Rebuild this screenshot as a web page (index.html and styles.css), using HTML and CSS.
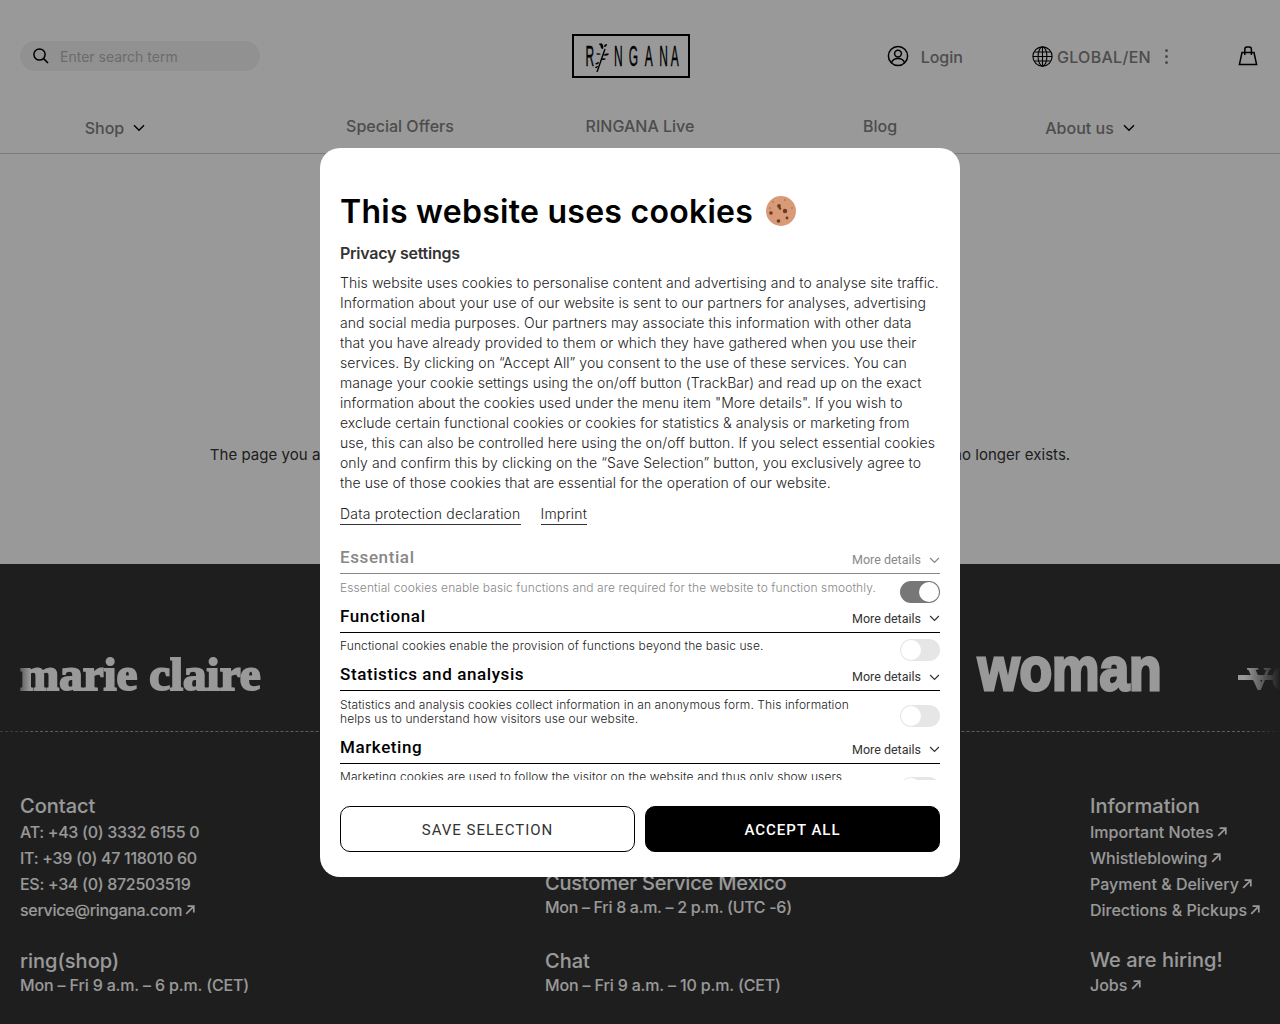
FILE: index.html
```html
<!DOCTYPE html>
<html lang="en">
<head>
<meta charset="utf-8">
<title>RINGANA</title>
<link rel="stylesheet" href="styles.css">
</head>
<body>
<svg class="sprite" width="0" height="0" aria-hidden="true">
  <symbol id="chev" viewBox="0 0 12 8"><path d="M1 1.2 6 6.2 11 1.2" fill="none" stroke="currentColor" stroke-width="1.4"/></symbol>
  <symbol id="arrow" viewBox="0 0 10 10"><path d="M1.2 8.8 8.4 1.6M2.6 1.2H8.8V7.4" fill="none" stroke="currentColor" stroke-width="1.7"/></symbol>
</svg>
<div class="page">
  <header class="header">
    <div class="top">
      <div class="search">
        <svg class="search-icon" viewBox="0 0 18 18" width="18" height="18"><circle cx="7.5" cy="7.5" r="5.6" fill="none" stroke="#000" stroke-width="1.5"/><path d="M11.6 11.6 16 16" stroke="#000" stroke-width="1.6" fill="none"/></svg>
        <span class="placeholder">Enter search term</span>
      </div>
      <div class="logo">
        <svg viewBox="0 0 118 44" width="118" height="44">
          <text class="logo-text" transform="scale(.4 1)" y="32"><tspan x="34">R</tspan><tspan x="105">N</tspan><tspan x="142">G</tspan><tspan x="182">A</tspan><tspan x="218">N</tspan><tspan x="247">A</tspan></text>
          <path d="M25 38 33 15" stroke="#000" stroke-width="1.4" fill="none"/>
          <path d="M30 15c-2-2-2-4-1-6 2 1 3 3 2 6ZM32 13c0-2 1-3 3-3 0 2-1 3-3 3ZM31 12c-2 0-4-1-4-2 2-1 3 0 4 2ZM29 20c-2-1-4-1-5 0 1 1 4 1 5 0ZM31 21c2-1 4-2 6-1-1 2-4 2-6 1ZM27 28c-2 0-3 1-4 2 2 1 4 0 4-2ZM29 26c2 0 4 0 5-1-1-1-4-1-5 1ZM26 32c-2 0-3 1-3 2 1 0 3 0 3-2Z" fill="#000"/>
        </svg>
      </div>
      <div class="tools">
        <div class="tool tool-login">
          <svg viewBox="0 0 22 22" width="22" height="22"><circle cx="11" cy="11" r="9.6" fill="none" stroke="#000" stroke-width="1.5"/><circle cx="11" cy="8.6" r="3.4" fill="none" stroke="#000" stroke-width="1.5"/><path d="M4.600 17.600c1-3 3.400-4 6.400-4s5.400 1 6.400 4" fill="none" stroke="#000" stroke-width="1.500"/></svg>
          <span>Login</span>
        </div>
        <div class="tool tool-lang">
          <svg viewBox="0 0 21 21" width="21" height="21"><g fill="none" stroke="#000" stroke-width="1.1"><circle cx="10.5" cy="10.5" r="9.6"/><ellipse cx="10.5" cy="10.5" rx="4.4" ry="9.6"/><path d="M10.500 1v19M1 10.500h19M2.200 6h16.600M2.200 15h16.600"/></g></svg>
          <span>GLOBAL/EN</span>
        </div>
        <div class="dots"><i></i><i></i><i></i></div>
        <svg class="bag" viewBox="0 0 20 20" width="20" height="20"><g fill="none" stroke="#000" stroke-width="1.5"><path d="M4 6.500h12L18.600 18.600H1.400Z"/><path d="M6.800 9V3.400c0-1.400 1-2.400 2-2.400h2.600c1 0 2 1 2 2.400V9"/></g></svg>
      </div>
    </div>
    <nav class="nav">
      <a class="nav-item nav-drop">Shop <svg width="12" height="8"><use href="#chev"/></svg></a>
      <a class="nav-item">Special Offers</a>
      <a class="nav-item">RINGANA Live</a>
      <a class="nav-item">Blog</a>
      <a class="nav-item nav-drop">About us <svg width="12" height="8"><use href="#chev"/></svg></a>
    </nav>
  </header>

  <main class="main">
    <p class="notfound">The page you are looking for cannot be found. It may have been removed, renamed or perhaps it simply no longer exists.</p>
  </main>

  <footer class="footer">
    <div class="press">
      <span class="brand brand-marie">marie claire</span>
      <span class="brand brand-hidden">Vogue</span>
      <span class="brand brand-woman">woman</span>
      <span class="brand brand-ve">ve</span>
    </div>
    <div class="columns">
      <section class="col">
        <h4>Contact</h4>
        <ul>
          <li class="tight">AT: +43 (0) 3332 6155 0</li>
          <li class="tight">IT: +39 (0) 47 118010 60</li>
          <li class="tight">ES: +34 (0) 872503519</li>
          <li class="tight">service@ringana.com <svg class="ext" width="10" height="10"><use href="#arrow"/></svg></li>
        </ul>
        <h4 class="later">ring(shop)</h4>
        <p class="mid">Mon – Fri 9 a.m. – 6 p.m. (CET)</p>
      </section>
      <section class="col col-mid">
        <h4>Customer Service</h4>
        <p class="tight">Mon – Fri 8 a.m. – 6 p.m. (CET)</p>
        <h4 class="mex">Customer Service Mexico</h4>
        <p class="tight">Mon – Fri 8 a.m. – 2 p.m. (UTC -6)</p>
        <h4 class="chat">Chat</h4>
        <p class="mid">Mon – Fri 9 a.m. – 10 p.m. (CET)</p>
      </section>
      <section class="col col-right">
        <h4>Information</h4>
        <ul>
          <li>Important Notes <svg class="ext" width="10" height="10"><use href="#arrow"/></svg></li>
          <li>Whistleblowing <svg class="ext" width="10" height="10"><use href="#arrow"/></svg></li>
          <li>Payment &amp; Delivery <svg class="ext" width="10" height="10"><use href="#arrow"/></svg></li>
          <li>Directions &amp; Pickups <svg class="ext" width="10" height="10"><use href="#arrow"/></svg></li>
        </ul>
        <h4 class="hiring">We are hiring!</h4>
        <p>Jobs <svg class="ext" width="10" height="10"><use href="#arrow"/></svg></p>
      </section>
    </div>
  </footer>
</div>

<div class="overlay"></div>

<div class="modal" role="dialog">
  <div class="scroll">
    <h1 class="title">This website uses cookies
      <svg class="cookie" viewBox="0 0 30 30" width="30" height="30">
        <circle cx="15" cy="15" r="15" fill="#d99a78"/>
        <g fill="#6b3a26"><circle cx="13" cy="10" r="1.9"/><circle cx="19" cy="15" r="2.2"/><circle cx="5" cy="17" r="1.8"/><circle cx="12.500" cy="25" r="1.8"/><circle cx="21" cy="22" r="1.4"/><circle cx="14" cy="12.500" r="1.3"/></g>
        <g fill="#b57a58"><circle cx="7" cy="6" r="1"/><circle cx="19" cy="4" r="1"/><circle cx="26" cy="12" r="1"/><circle cx="4" cy="12" r=".9"/></g>
      </svg>
    </h1>
    <h2 class="subtitle">Privacy settings</h2>
    <p class="intro">This website uses cookies to personalise content and advertising and to analyse site traffic. Information about your use of our website is sent to our partners for analyses, advertising and social media purposes. Our partners may associate this information with other data that you have already provided to them or which they have gathered when you use their services. By clicking on “Accept All” you consent to the use of these services. You can manage your cookie settings using the on/off button (TrackBar) and read up on the exact information about the cookies used under the menu item "More details". If you wish to exclude certain functional cookies or cookies for statistics &amp; analysis or marketing from use, this can also be controlled here using the on/off button. If you select essential cookies only and confirm this by clicking on the “Save Selection” button, you exclusively agree to the use of those cookies that are essential for the operation of our website.</p>
    <div class="links"><a>Data protection declaration</a><a>Imprint</a></div>

    <section class="cat cat-off">
      <div class="cat-head"><h3>Essential</h3><span class="more">More details <svg width="11" height="7"><use href="#chev"/></svg></span></div>
      <div class="cat-body"><p>Essential cookies enable basic functions and are required for the website to function smoothly.</p><span class="toggle toggle-on"></span></div>
    </section>
    <section class="cat">
      <div class="cat-head"><h3>Functional</h3><span class="more">More details <svg width="11" height="7"><use href="#chev"/></svg></span></div>
      <div class="cat-body"><p>Functional cookies enable the provision of functions beyond the basic use.</p><span class="toggle"></span></div>
    </section>
    <section class="cat">
      <div class="cat-head"><h3>Statistics and analysis</h3><span class="more">More details <svg width="11" height="7"><use href="#chev"/></svg></span></div>
      <div class="cat-body"><p>Statistics and analysis cookies collect information in an anonymous form. This information helps us to understand how visitors use our website.</p><span class="toggle"></span></div>
    </section>
    <section class="cat">
      <div class="cat-head"><h3>Marketing</h3><span class="more">More details <svg width="11" height="7"><use href="#chev"/></svg></span></div>
      <div class="cat-body"><p>Marketing cookies are used to follow the visitor on the website and thus only show users ads that are relevant and engaging for them.</p><span class="toggle"></span></div>
    </section>
  </div>
  <div class="actions">
    <button class="btn btn-save">SAVE SELECTION</button>
    <button class="btn btn-accept">ACCEPT ALL</button>
  </div>
</div>
</body>
</html>
```
FILE: styles.css
```css
* { box-sizing: border-box; }
html, body { margin: 0; padding: 0; height: 100%; overflow: hidden; }
body { font-family: Inter, "Liberation Sans", sans-serif; background: #fff; color: #000; }
.sprite { position: absolute; }
h1, h2, h3, h4, p, ul { margin: 0; padding: 0; }
ul { list-style: none; }

.page { height: 1024px; display: flex; flex-direction: column; overflow: hidden; }

/* header */
.header { height: 154px; border-bottom: 1px solid #ccc; flex: none; }
.top { display: flex; align-items: center; justify-content: space-between; height: 112px; padding: 0 22px 0 20px; position: relative; }
.search { width: 240px; height: 30px; background: #f2f2f2; border-radius: 15px; display: flex; align-items: center; padding-left: 12px; }
.search-icon { flex: none; }
.placeholder { margin-left: 10px; padding-top: 1px; font-size: 14px; color: #b4b4b4; }
.logo { position: absolute; left: 572px; top: 34px; width: 118px; height: 44px; border: 2px solid #000; line-height: 0; }
.logo svg { margin: -2px; }
.logo-text { font-family: "Liberation Sans", sans-serif; font-size: 30px; fill: #000; stroke: #000; stroke-width: .4px; }
.tools { display: flex; align-items: center; font-size: 16px; font-weight: 500; color: #808080; }
.tools span { padding-top: 2px; }
.tool { display: flex; align-items: center; }
.tool-login span { margin-left: 12px; }
.tool-lang { margin-left: 69px; }
.tool-lang span { margin-left: 4px; letter-spacing: .3px; }
.dots { display: flex; flex-direction: column; gap: 3px; margin-left: 14px; margin-right: 70px; }
.dots i { width: 3px; height: 3px; border-radius: 50%; background: #808080; display: block; }
.nav { display: grid; grid-template-columns: 230px 340px 140px 340px 80px; height: 41px; font-size: 16px; font-weight: 500; color: #808080; }
.nav-item { justify-self: center; white-space: nowrap; display: flex; align-items: center; height: 28px; }
.nav-drop { margin-top: 2px; gap: 9px; }
.nav-drop svg { color: #000; margin-top: -1px; }

/* main */
.main { height: 410px; flex: none; padding-top: 291px; }
.notfound { text-align: center; font-size: 15px; letter-spacing: .035px; line-height: 20px; color: #333; white-space: nowrap; }

/* footer */
.footer { flex: 1; background: #333; color: #fff; }
.press { height: 168px; border-bottom: 1px dashed #999; padding: 0 0 0 20px; display: flex; align-items: flex-start; overflow: hidden; white-space: nowrap; position: relative; -webkit-mask-image: linear-gradient(90deg, rgba(0,0,0,.5) 20px, #000 30px, #000 1245px, transparent 1280px); mask-image: linear-gradient(90deg, rgba(0,0,0,.5) 20px, #000 30px, #000 1245px, transparent 1280px); }
.brand { display: block; flex: none; }
.brand-marie { font-family: "Liberation Serif", serif; font-weight: 700; font-size: 47px; line-height: 50px; margin-top: 85px; width: 242px; -webkit-text-stroke: 2px #fff; }
.brand-hidden { font-family: "Liberation Serif", serif; font-weight: 700; font-size: 47px; line-height: 50px; margin-top: 85px; width: 200px; margin-left: 150px; }
.brand-woman { font-family: "Liberation Sans", sans-serif; font-weight: 700; font-size: 62px; line-height: 60px; margin-top: 75px; margin-left: 366px; width: 183px; -webkit-text-stroke: 3px #fff; transform: scaleX(.86); transform-origin: left center; }
.brand-ve { font-family: "Liberation Serif", serif; font-weight: 700; font-size: 48px; line-height: 50px; margin-top: 85px; margin-left: 77px; padding-left: 9px; position: relative; }
.brand-ve::before { content: ""; position: absolute; left: 0; right: 0; top: 26px; height: 5px; background: #fff; }

.columns { display: grid; grid-template-columns: 525px 545px 1fr; padding: 62px 0 0 20px; }
.col h4 { font-size: 20px; font-weight: 500; line-height: 25px; }
.col li { font-size: 16px; font-weight: 500; line-height: 26px; white-space: nowrap; }
.col p { font-size: 16px; font-weight: 500; line-height: 24px; margin-top: -1px; white-space: nowrap; }
.col .tight { letter-spacing: -.3px; }
.col .mid { letter-spacing: -.15px; }
.col .later { margin-top: 25.5px; }
.col .mex { margin-top: 28.5px; letter-spacing: -.2px; }
.col .chat { margin-top: 30px; }
.col .hiring { margin-top: 22.5px; line-height: 28px; }
.ext { margin-left: -1px; vertical-align: 1px; }

/* overlay + dialog */
.overlay { position: fixed; inset: 0; background: rgba(0, 0, 0, .4); }
.modal { position: fixed; left: 320px; top: 148px; width: 640px; height: 729px; background: #fff; border-radius: 20px; padding: 20px 20px 25px; display: flex; flex-direction: column; }
.scroll { height: 612px; overflow: hidden; flex: none; }
.title { font-size: 32px; font-weight: 600; letter-spacing: .27px; line-height: 46px; margin-top: 21px; display: flex; align-items: center; gap: 13px; white-space: nowrap; height: 46px; }
.cookie { flex: none; margin-top: -3px; }
.subtitle { font-size: 16px; font-weight: 600; letter-spacing: -.25px; line-height: 22px; color: #333; margin-top: 7px; }
.intro { font-size: 14px; font-weight: 300; letter-spacing: .06px; line-height: 20px; color: #222; margin-top: 9px; }
.links { display: flex; gap: 20px; margin-top: 11px; font-size: 14px; font-weight: 300; letter-spacing: .2px; line-height: 20px; color: #222; }
.links a { border-bottom: 1px solid #333; }
.cat { font-family: Roboto, sans-serif; }
.cat:first-of-type { margin-top: 19px; }
.cat-head { display: flex; justify-content: space-between; align-items: flex-start; height: 30px; border-bottom: 1px solid #000; }
.cat h3 { font-size: 17px; font-weight: 500; line-height: 22px; letter-spacing: .6px; margin-top: 2px; }
.more { font-size: 12.5px; line-height: 16px; margin-top: 8px; display: flex; align-items: center; gap: 8px; color: #333; }
.cat-body { display: flex; align-items: center; justify-content: space-between; padding-top: 6.5px; }
.cat-body p { font-family: Inter, sans-serif; font-weight: 300; width: 520px; font-size: 12px; letter-spacing: .1px; line-height: 14px; color: #222; padding-bottom: 8px; }
.toggle { width: 40px; height: 22px; background: #e6e6e6; border-radius: 11px; position: relative; flex: none; }
.toggle::after { content: ""; position: absolute; left: 1px; top: 1px; width: 20px; height: 20px; border-radius: 50%; background: #fff; }
.toggle-on { background: #777; }
.toggle-on::after { left: auto; right: 1px; }
.cat-off { color: #888; }
.cat-off .cat-head { border-color: #888; }
.cat-off .more { color: #888; }
.cat-off .cat-body p { color: #888; white-space: nowrap; }
.actions { display: flex; gap: 10px; margin-top: 26px; }
.btn { flex: 1; height: 46px; padding-top: 2px; border-radius: 10px; font-family: Roboto, sans-serif; font-size: 15px; letter-spacing: 1px; cursor: pointer; }
.btn-save { background: #fff; border: 1px solid #000; color: #333; }
.btn-accept { background: #000; border: 1px solid #000; color: #fff; font-weight: 500; }
```
